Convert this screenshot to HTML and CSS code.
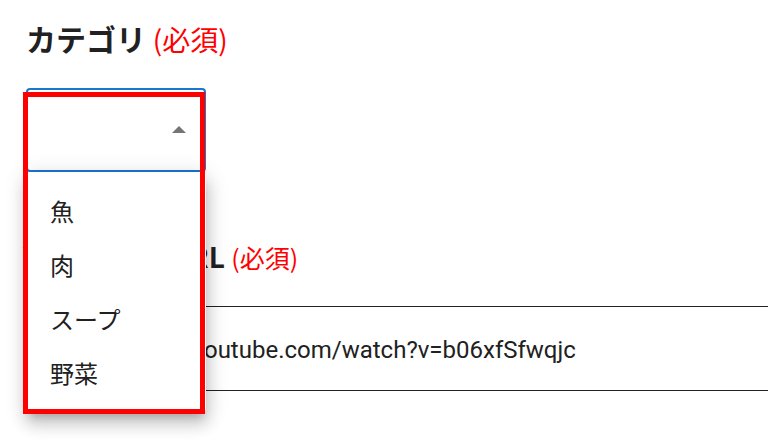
FILE: index.html
```html
<!DOCTYPE html>
<html lang="ja">
<head>
<meta charset="utf-8">
<link rel="stylesheet" href="styles.css">
</head>
<body>
<div class="page">
  <div class="field">
    <h2 class="label">カテゴリ <span class="req">(必須)</span></h2>
    <div class="select">
      <span class="arrow"></span>
    </div>
  </div>
  <div class="field">
    <h2 class="label label2">YouTubeのURL <span class="req req2">(必須)</span></h2>
    <div class="input">https://www.youtube.com/watch?v=b06xfSfwqjc</div>
  </div>

  <ul class="menu">
    <li>魚</li>
    <li>肉</li>
    <li>スープ</li>
    <li>野菜</li>
  </ul>
  <div class="frame"></div>
</div>
</body>
</html>
```
FILE: styles.css
```css
html, body {
  margin: 0;
  padding: 0;
  background: #fff;
  overflow: hidden;
}
body {
  width: 768px;
  height: 443px;
  font-family: "Noto Sans CJK JP", "Noto Sans", sans-serif;
  color: rgba(0, 0, 0, 0.87);
}
.page {
  position: relative;
  padding: 20px 0 0 26px;
  width: 1000px;
}
.label {
  margin: 0;
  font-size: 30px;
  line-height: 36px;
  height: 36px;
  font-weight: 700;
  color: #212121;
  white-space: nowrap;
}
.label2 {
  font-size: 28px;
  line-height: 40px;
  height: 40px;
  margin-left: -3px;
}
.req {
  color: #ff0000;
  font-weight: 400;
  font-size: 28px;
}
.req2 {
  font-size: 25px;
}
.select {
  box-sizing: border-box;
  margin-top: 32px;
  width: 180px;
  height: 84px;
  border: 2px solid #1976d2;
  border-radius: 4px;
  background: #fff;
  display: flex;
  align-items: center;
  justify-content: flex-end;
  padding-right: 18px;
}
.arrow {
  width: 0;
  height: 0;
  border-left: 7px solid transparent;
  border-right: 7px solid transparent;
  border-bottom: 7px solid #757575;
  margin-top: -1px;
}
.field + .field {
  margin-top: 64px;
}
.input {
  box-sizing: border-box;
  margin-top: 30px;
  width: 900px;
  height: 85px;
  border: 1px solid #222;
  border-radius: 6px;
  display: flex;
  align-items: center;
  padding: 2px 0 0 29px;
  font-family: Roboto, "Liberation Sans", sans-serif;
  font-size: 24px;
  color: #212121;
}
.menu {
  position: absolute;
  left: 27px;
  top: 172px;
  width: 179px;
  box-sizing: border-box;
  margin: 0;
  padding: 12px 0;
  list-style: none;
  background: #fff;
  border-radius: 4px;
  box-shadow: 0 8px 8px -4px rgba(0,0,0,0.2), 0 12px 15px 2px rgba(0,0,0,0.14), 0 4px 21px 3px rgba(0,0,0,0.12);
  z-index: 2;
}
.menu li {
  height: 54px;
  line-height: 54px;
  padding-left: 23px;
  font-size: 24px;
  font-weight: 400;
  color: #212121;
}
.frame {
  position: absolute;
  left: 23px;
  top: 92px;
  width: 182px;
  height: 322px;
  box-sizing: border-box;
  border: 5px solid #ff0000;
  z-index: 3;
}
```
